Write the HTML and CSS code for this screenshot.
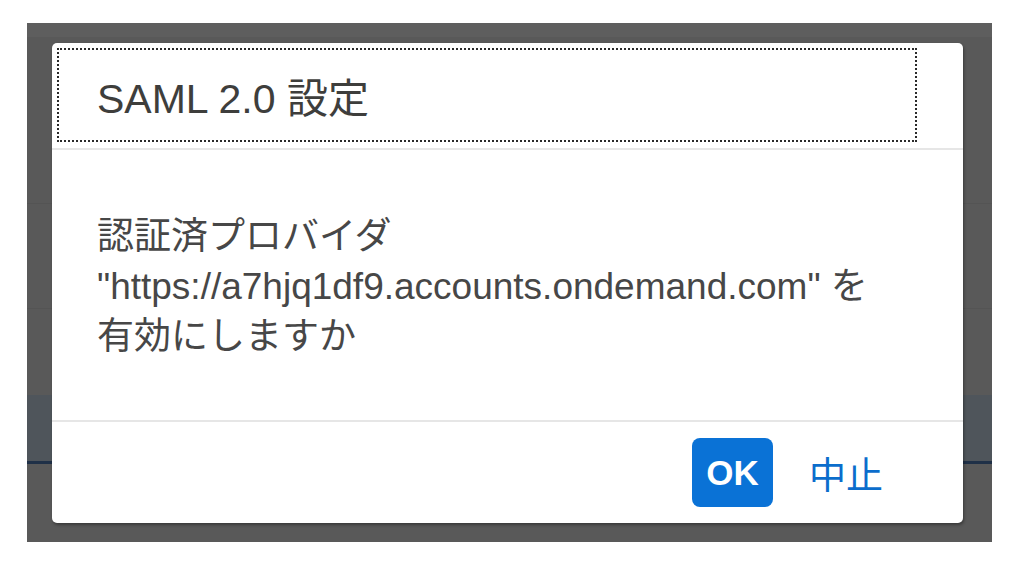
FILE: index.html
```html
<!DOCTYPE html>
<html lang="ja">
<head>
<meta charset="utf-8">
<title>SAML 2.0 設定</title>
<link rel="stylesheet" href="styles.css">
</head>
<body>
<div class="backdrop">
  <div class="modal">
    <header class="modal-header">
      <h2 class="modal-title">SAML 2.0 設定</h2>
    </header>
    <div class="modal-body">
      <p class="message">認証済プロバイダ<br>"https://a7hjq1df9.accounts.ondemand.com" を<br>有効にしますか</p>
    </div>
    <footer class="modal-footer">
      <button class="btn-ok" type="button">OK</button>
      <button class="btn-cancel" type="button">中止</button>
    </footer>
  </div>
</div>
</body>
</html>
```

FILE: styles.css
```css
* { box-sizing: border-box; }

html, body {
  margin: 0;
  padding: 0;
  background: #ffffff;
}

body {
  font-family: "Liberation Sans", "Noto Sans CJK JP", sans-serif;
  color: #3e3e3c;
  width: 1024px;
  height: 567px;
  overflow: hidden;
}

.backdrop {
  margin: 23px 0 0 27px;
  width: 965px;
  height: 519px;
  padding: 20px 29px 19px 25px;
  background:
    linear-gradient(to bottom,
      #5e5e5e 0, #5e5e5e 14px,
      #595959 14px, #595959 180px,
      #545454 180px, #545454 181px,
      #595959 181px, #595959 285px,
      #545454 285px, #545454 286px,
      #595959 286px, #595959 372px,
      #4f555b 372px, #4f555b 438px,
      #1f3047 438px, #1f3047 441px,
      #595959 441px, #595959 100%);
}

.modal {
  height: 480px;
  background: #ffffff;
  border-radius: 5px;
  display: flex;
  flex-direction: column;
  box-shadow: 1px 2px 3px rgba(0, 0, 0, 0.35);
}

.modal-header {
  padding: 5px 0 6px 5px;
  border-bottom: 2px solid #e6e6e6;
}

.modal-title {
  margin: 0;
  width: 860px;
  height: 94px;
  border: 2px dotted #2a2a2a;
  padding-left: 38px;
  display: flex;
  align-items: center;
  font-size: 41px;
  font-weight: normal;
  color: #3e3e3c;
}

.modal-body {
  height: 270px;
  padding: 62px 45px 0 45px;
}

.message {
  margin: 0;
  font-size: 37px;
  line-height: 50px;
  color: #474747;
}

.modal-footer {
  flex: 1;
  border-top: 2px solid #e6e6e6;
  display: flex;
  justify-content: flex-end;
  align-items: center;
  gap: 36px;
  padding-right: 80px;
}

.btn-ok {
  width: 81px;
  height: 69px;
  border: none;
  border-radius: 8px;
  background: #0a72d6;
  color: #ffffff;
  font-family: "Liberation Sans", sans-serif;
  font-weight: bold;
  font-size: 35px;
  padding: 0;
}

.btn-cancel {
  border: none;
  background: none;
  padding: 0;
  color: #0b6dcc;
  font-family: "Liberation Sans", "Noto Sans CJK JP", sans-serif;
  font-size: 37px;
}
```
